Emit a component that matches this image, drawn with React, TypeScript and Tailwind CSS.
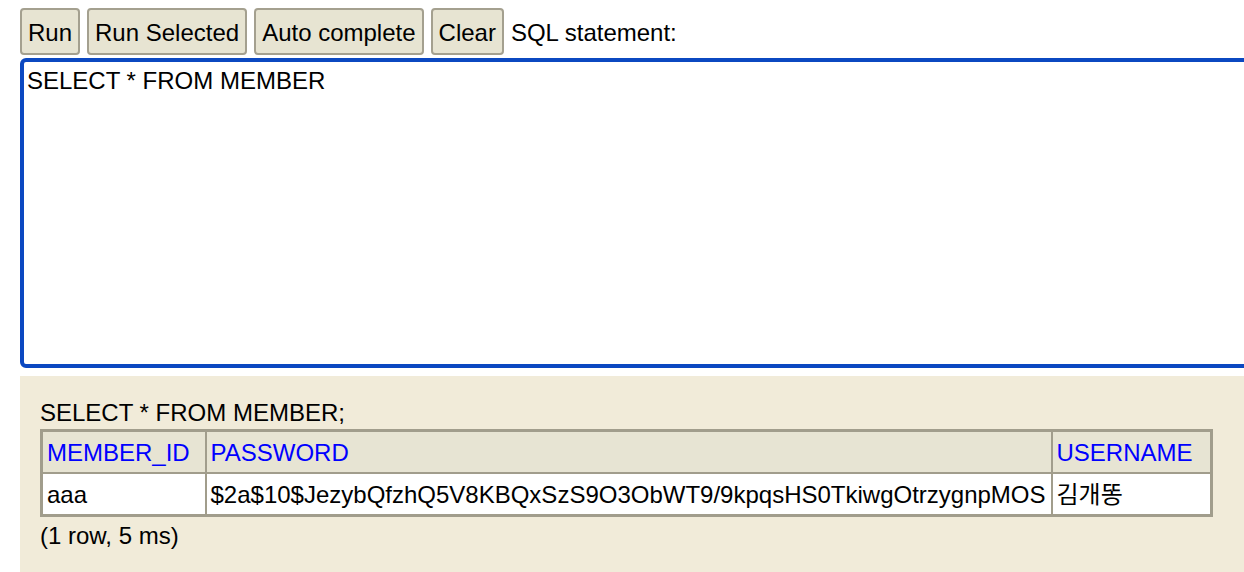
const font = { fontFamily: '"Liberation Sans", Arial, "Noto Sans CJK KR", sans-serif' };

const buttons = ["Run", "Run Selected", "Auto complete", "Clear"];

const rows = [
  {
    id: "aaa",
    password: "$2a$10$JezybQfzhQ5V8KBQxSzS9O3ObWT9/9kpqsHS0TkiwgOtrzygnpMOS",
    username: "김개똥",
  },
];

export default function App() {
  return (
    <div className="h-[572px] w-[1244px] overflow-hidden bg-white text-[24px] text-black" style={font}>
      <div className="pl-[20px] pt-[8px]">
        <div className="flex items-center gap-[7px]">
          {buttons.map((b) => (
            <button
              key={b}
              type="button"
              className="h-[47px] rounded-[4px] border-2 border-[#a4a08f] bg-[#e7e4d2] px-[6px] pt-[3px] leading-none"
            >
              {b}
            </button>
          ))}
          <span className="pt-[3px] leading-none">SQL statement:</span>
        </div>

        <textarea
          readOnly
          defaultValue="SELECT * FROM MEMBER"
          className="mt-[3px] block h-[310px] w-[1240px] resize-none rounded-[6px] border-[4px] border-[#0b48c1] bg-white px-[3px] py-[5px] leading-[28px] outline-none"
          style={font}
        />

        <div className="mt-[8px] h-[200px] w-[1240px] bg-[#f1ebd9] pl-[20px] pt-[23px]">
          <div className="leading-[28px]">SELECT * FROM MEMBER;</div>
          <table className="mt-[2px] border-collapse border-[3px] border-[#a19d8c]">
            <thead>
              <tr className="bg-[#e7e4d3]">
                <th className="h-[42px] w-[164px] border-2 border-[#a19d8c] px-[4px] pt-[2px] text-left font-normal text-[#0000ff]">
                  MEMBER_ID
                </th>
                <th className="w-[846px] border-2 border-[#a19d8c] px-[4px] pt-[2px] text-left font-normal text-[#0000ff]">
                  PASSWORD
                </th>
                <th className="w-[160px] border-2 border-[#a19d8c] px-[4px] pt-[2px] text-left font-normal text-[#0000ff]">
                  USERNAME
                </th>
              </tr>
            </thead>
            <tbody>
              {rows.map((r) => (
                <tr key={r.id} className="bg-white">
                  <td className="h-[43px] border-2 border-[#a19d8c] px-[4px] pt-[2px]">{r.id}</td>
                  <td className="whitespace-nowrap border-2 border-[#a19d8c] px-[4px] pt-[2px]">{r.password}</td>
                  <td className="border-2 border-[#a19d8c] px-[4px] pt-[2px]">{r.username}</td>
                </tr>
              ))}
            </tbody>
          </table>
          <div className="mt-[5px] leading-[28px]">(1 row, 5 ms)</div>
        </div>
      </div>
    </div>
  );
}
